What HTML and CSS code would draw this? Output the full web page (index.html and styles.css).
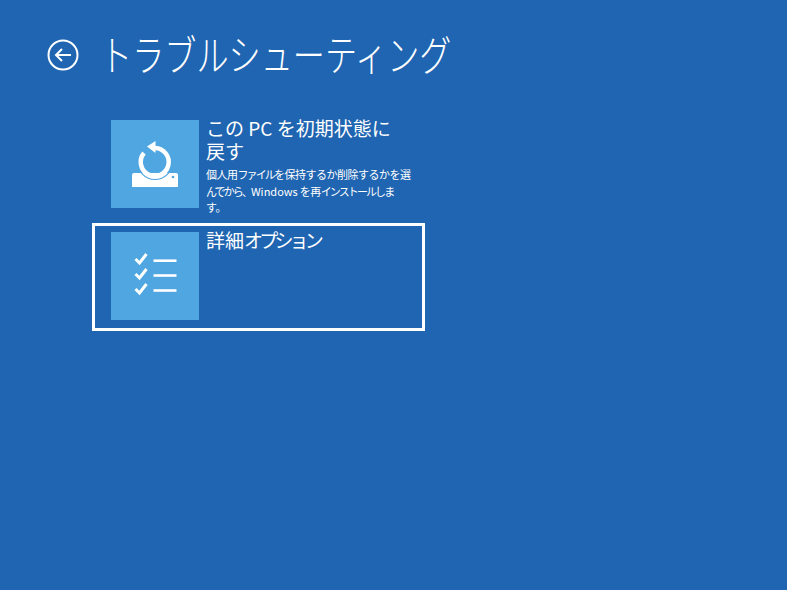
FILE: index.html
```html
<!DOCTYPE html>
<html lang="ja">
<head>
<meta charset="utf-8">
<title>トラブルシューティング</title>
<link rel="stylesheet" href="styles.css">
</head>
<body>
<header class="header">
  <svg class="back" viewBox="0 0 32 32" width="32" height="32" aria-hidden="true">
    <circle cx="16" cy="16" r="14.500" fill="none" stroke="#fff" stroke-width="2"/>
    <path d="M9 16H24M15 10L9 16L15 22" fill="none" stroke="#fff" stroke-width="2"/>
  </svg>
  <h1 class="title">トラブルシューティング</h1>
</header>
<main class="list">
  <div class="item">
    <div class="tile">
      <svg viewBox="0 0 88 88" width="88" height="88" aria-hidden="true">
        <path d="M21 55Q21 53 23 53H65Q67 53 67 55V67H21Z" fill="#fff"/>
        <circle cx="44" cy="42" r="17.500" fill="none" stroke="#4fa6e0" stroke-width="1.200"/>
        <path d="M44 28A14 14 0 1 1 33 33" fill="none" stroke="#fff" stroke-width="4.500"/>
        <path d="M36 26.500L44.500 21V33Z" fill="#fff"/>
        <circle cx="62" cy="57" r="1.300" fill="#4fa6e0"/>
      </svg>
    </div>
    <div class="text">
      <div class="name">この PC を初期状態に<br>戻す</div>
      <div class="desc">個人用<span class="tight">ファイル</span>を保持するか削除するかを選<br><span class="tight">んでから、</span><span class="latin">Windows</span> を再<span class="tight">インストールしま</span><br>す。</div>
    </div>
  </div>
  <div class="item focused">
    <div class="tile">
      <svg viewBox="0 0 88 88" width="88" height="88" aria-hidden="true">
        <g fill="none" stroke="#fff" stroke-width="3">
          <path d="M24.500 27L28.500 31L35.500 22"/>
          <path d="M24.500 42L28.500 46L35.500 37"/>
          <path d="M24.500 57L28.500 61L35.500 52"/>
        </g>
        <g fill="none" stroke="#fff" stroke-width="2.600">
          <path d="M42.500 28.700H65.500"/>
          <path d="M42.500 43.500H65.500"/>
          <path d="M42.500 58.500H65.500"/>
        </g>
      </svg>
    </div>
    <div class="text">
      <div class="name">詳細<span class="kana">オプション</span></div>
    </div>
  </div>
</main>
</body>
</html>
```
FILE: styles.css
```css
html, body {
  margin: 0;
  height: 100%;
}
body {
  background: #1f65b1;
  color: #fff;
  font-family: "Noto Sans CJK JP", "Noto Sans", sans-serif;
  overflow: hidden;
}
.header {
  display: flex;
  align-items: center;
  gap: 21px;
  padding: 26px 0 0 47px;
  height: 58px;
}
.back {
  flex: none;
}
.title {
  margin: -5px 0 0;
  font-size: 42px;
  font-weight: 300;
  line-height: 58px;
  white-space: nowrap;
  transform: scaleX(0.765);
  transform-origin: left center;
}
.list {
  display: flex;
  flex-direction: column;
  gap: 4px;
  margin: 27px 0 0 92px;
  width: 333px;
}
.item {
  box-sizing: border-box;
  display: flex;
  gap: 7px;
  height: 108px;
  padding: 6px 8px 6px 16px;
  border: 3px solid transparent;
}
.item.focused {
  border-color: #fff;
}
.tile {
  flex: none;
  width: 88px;
  height: 88px;
  background: #4fa6e0;
}
.tile svg {
  display: block;
}
.text {
  min-width: 0;
  margin-top: -4px;
}
.name {
  font-size: 19px;
  line-height: 23px;
  white-space: nowrap;
}
.kana {
  letter-spacing: -3.800px;
}
.desc {
  margin-top: 4px;
  font-size: 11px;
  line-height: 16.500px;
  letter-spacing: -0.500px;
  white-space: nowrap;
}
.tight {
  letter-spacing: -1.900px;
}
.latin {
  letter-spacing: 0;
}
```
